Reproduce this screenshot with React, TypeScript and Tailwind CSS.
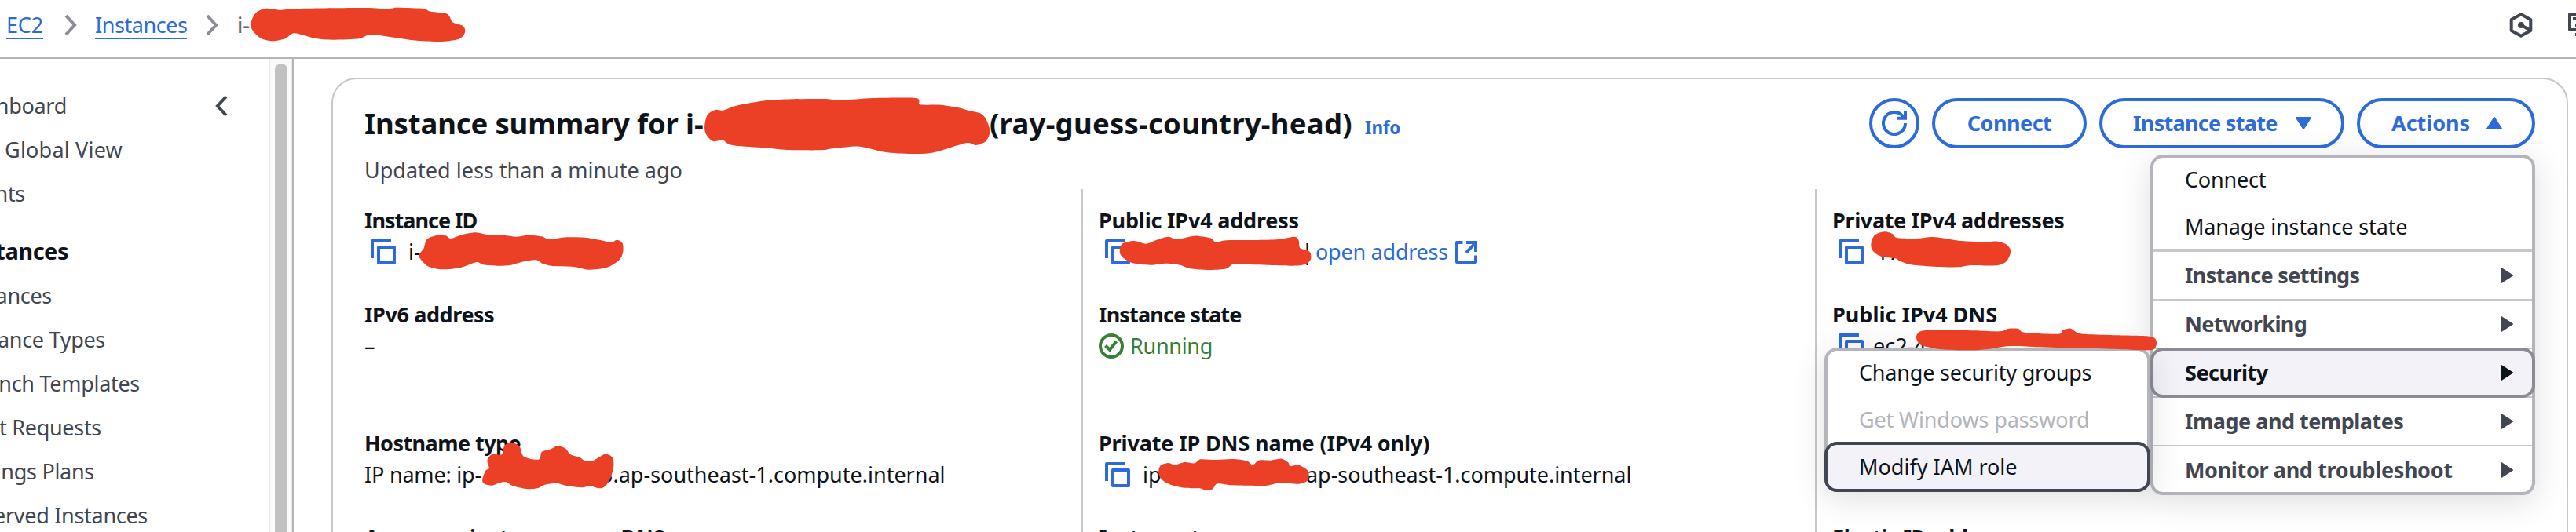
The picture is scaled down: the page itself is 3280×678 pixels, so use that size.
import type { ReactNode } from "react";

type Pt = [number, number];

const strokeIcon = { fill: "none", stroke: "currentColor", strokeWidth: 4 } as const;

function Copy() {
  return (
    <svg className="ml-2 mr-4 h-8 w-8 shrink-0 text-[#2d6bdb]" viewBox="0 0 32 32" {...strokeIcon}>
      <path d="M2 24V2H26" strokeLinejoin="round" />
      <rect x="10" y="10" width="20" height="20" strokeLinejoin="round" />
    </svg>
  );
}

function Chevron({ className, flip }: { className: string; flip?: boolean }) {
  return (
    <svg className={className} viewBox="0 0 16 28" {...strokeIcon}>
      <path d={flip ? "M14 2L3 14L14 26" : "M2 2L13 14L2 26"} />
    </svg>
  );
}

function Refresh() {
  return (
    <svg className="h-8 w-8" viewBox="0 0 32 32" {...strokeIcon}>
      <path d="M30 16A14 14 0 1 1 26.5 6.8L28.5 9.5" />
      <path d="M30 0V9.7H20" />
    </svg>
  );
}

function External() {
  return (
    <svg className="ml-[9px] h-[29px] w-7" viewBox="0 0 28 29" {...strokeIcon}>
      <path d="M9.5 2H2V27H26V18.5" strokeLinejoin="round" />
      <path d="M14 2H26V14M26 2L14 15" />
    </svg>
  );
}

function Check() {
  return (
    <svg className="mr-2 h-8 w-8" viewBox="0 0 32 32" {...strokeIcon}>
      <circle cx="16" cy="16" r="14" />
      <path d="M8.5 15.5L14 20.8L22.5 10" />
    </svg>
  );
}

function Caret({ up }: { up?: boolean }) {
  return (
    <svg className="h-4 w-5" viewBox="0 0 20 16" fill="currentColor" stroke="currentColor" strokeWidth="2" strokeLinejoin="round">
      <path d={up ? "M1 15H19L10 1Z" : "M1 1H19L10 15Z"} />
    </svg>
  );
}

function Arrow() {
  return (
    <svg className="h-5 w-4" viewBox="0 0 16 20" fill="currentColor" stroke="currentColor" strokeWidth="2" strokeLinejoin="round">
      <path d="M1 1V19L15 10Z" />
    </svg>
  );
}

function Label({ children, className = "" }: { children: string; className?: string }) {
  return <div className={`h-10 font-bold ${className}`}>{children}</div>;
}

function Value({ children, className = "" }: { children?: ReactNode; className?: string }) {
  return <div className={`flex h-10 items-center ${className}`}>{children}</div>;
}

function NavItem({ text, width, track = "tracking-[-0.3px]" }: { text: string; width: string; track?: string }) {
  return (
    <div className={`flex h-14 items-center justify-end overflow-hidden ${width} ${track}`}>{text}</div>
  );
}

function MenuGroup({ text, className }: { text: string; className: string }) {
  return (
    <div className={`flex items-center justify-between pl-10 pr-6 font-bold text-[#424650] ${className}`}>
      <span>{text}</span>
      <Arrow />
    </div>
  );
}

function smooth(pts: Pt[]) {
  const n = pts.length;
  let d = `M${pts[0][0]} ${pts[0][1]}`;
  for (let i = 0; i < n; i++) {
    const a = pts[(i + n - 1) % n];
    const b = pts[i];
    const c = pts[(i + 1) % n];
    const e = pts[(i + 2) % n];
    d += `C${b[0] + (c[0] - a[0]) / 7} ${b[1] + (c[1] - a[1]) / 7} ${c[0] - (e[0] - b[0]) / 7} ${c[1] - (e[1] - b[1]) / 7} ${c[0]} ${c[1]}`;
  }
  return d + "Z";
}

const strokes: { t: string; p: Pt[] }[] = [
  {
    t: "translate(0 0) scale(0.4082 0.3333)",
    p: [[782, 97], [788, 68], [802, 45], [830, 32], [877, 38], [930, 33], [1140, 30], [1205, 35], [1240, 29], [1320, 33], [1342, 44], [1395, 53], [1412, 85], [1445, 100], [1450, 125], [1430, 150], [1370, 159], [1290, 154], [1162, 133], [1120, 148], [1040, 152], [980, 146], [918, 127], [890, 148], [850, 157], [815, 147], [790, 120]],
  },
  {
    t: "translate(400 90) scale(0.574 0.3333)",
    p: [[866, 215], [872, 170], [890, 150], [907, 152], [940, 133], [1000, 115], [1060, 109], [1130, 108], [1170, 113], [1240, 105], [1330, 104], [1342, 115], [1345, 130], [1390, 131], [1430, 142], [1450, 152], [1480, 165], [1493, 195], [1499, 235], [1490, 270], [1468, 285], [1446, 277], [1375, 313], [1325, 318], [1265, 311], [1210, 290], [1150, 298], [1125, 304], [1050, 303], [1000, 295], [935, 287], [918, 280], [907, 266], [885, 270], [870, 245]],
  },
  {
    t: "translate(400 90) scale(0.574 0.3333)",
    p: [[232, 705], [243, 680], [250, 645], [272, 630], [292, 631], [303, 642], [325, 629], [358, 619], [385, 628], [420, 629], [448, 635], [475, 629], [505, 634], [521, 645], [560, 637], [600, 638], [635, 648], [658, 657], [672, 647], [684, 660], [685, 695], [676, 725], [650, 752], [610, 761], [575, 750], [530, 747], [507, 738], [492, 724], [460, 732], [435, 744], [405, 746], [375, 742], [360, 732], [325, 753], [285, 760], [255, 750], [238, 725]],
  },
  {
    t: "translate(400 440) scale(0.574 0.3333)",
    p: [[373, 515], [380, 480], [388, 470], [384, 440], [395, 416], [416, 418], [422, 385], [435, 371], [455, 385], [465, 425], [498, 437], [505, 408], [525, 397], [540, 385], [558, 395], [568, 417], [590, 430], [602, 443], [620, 440], [645, 416], [662, 430], [664, 465], [657, 510], [645, 540], [632, 547], [610, 537], [595, 544], [560, 537], [538, 527], [512, 533], [495, 547], [470, 549], [440, 537], [428, 524], [412, 525], [395, 536], [378, 530]],
  },
  {
    t: "translate(1240 90) scale(0.5102 0.3333)",
    p: [[364, 690], [370, 662], [400, 651], [430, 662], [455, 648], [485, 635], [507, 645], [550, 632], [590, 640], [604, 657], [630, 649], [700, 648], [760, 645], [800, 635], [811, 650], [814, 678], [838, 692], [841, 720], [828, 740], [790, 746], [700, 742], [650, 739], [630, 757], [590, 762], [540, 757], [515, 743], [480, 737], [440, 743], [395, 735], [370, 712]],
  },
  {
    t: "translate(1340 440) scale(0.5102 0.3333)",
    p: [[265, 485], [270, 460], [290, 450], [305, 458], [330, 447], [355, 451], [370, 436], [410, 438], [450, 435], [485, 442], [500, 458], [515, 440], [545, 440], [572, 434], [588, 447], [594, 462], [615, 458], [638, 480], [638, 515], [615, 530], [570, 525], [530, 537], [450, 535], [412, 529], [400, 550], [385, 556], [368, 547], [330, 545], [295, 533], [272, 512]],
  },
  {
    t: "translate(2280 90) scale(0.3333 0.3333)",
    p: [[307, 665], [320, 630], [358, 616], [390, 625], [406, 639], [480, 642], [540, 636], [600, 643], [640, 650], [740, 655], [790, 653], [825, 665], [841, 690], [825, 728], [785, 745], [690, 744], [640, 751], [560, 750], [460, 742], [415, 727], [400, 718], [345, 710], [315, 690]],
  },
  {
    t: "translate(2280 400) scale(0.3333 0.3333)",
    p: [[480, 92], [490, 70], [520, 62], [600, 60], [700, 64], [800, 67], [830, 57], [870, 57], [894, 71], [1022, 77], [1040, 62], [1070, 56], [1095, 72], [1130, 78], [1250, 82], [1370, 86], [1395, 98], [1397, 120], [1380, 138], [1300, 137], [1150, 132], [1040, 130], [950, 127], [840, 123], [760, 134], [690, 139], [580, 136], [500, 120]],
  },
];

function Submenu() {
  return (
    <div className="absolute right-[calc(100%+4px)] top-[242px] h-[184px] w-[415px] rounded-2xl border-4 border-[#b4b4bb] bg-white shadow-[0_8px_40px_2px_rgba(0,7,22,0.12)]">
      <div className="flex h-14 items-center pl-10 tracking-[-0.2px]">Change security groups</div>
      <div className="flex h-[60px] items-center pl-10 pt-1 tracking-[-0.15px] text-[#b4b4bb]">Get Windows password</div>
      <div className="-mx-1 flex h-16 items-center rounded-2xl border-4 border-[#424650] bg-[#f3f2f8] pl-10">
        Modify IAM role
      </div>
    </div>
  );
}

function ActionsMenu() {
  return (
    <div className="absolute right-0 top-[72px] z-10 h-[434px] w-[490px] rounded-2xl border-4 border-[#b4b4bb] bg-white font-normal text-[#0f141a] shadow-[0_8px_40px_2px_rgba(0,7,22,0.12)]">
      <div className="flex h-14 items-center pl-10 tracking-[-0.2px]">Connect</div>
      <div className="flex h-16 items-center border-b-4 border-[#c6c6cd] pl-10 pt-1 tracking-[-0.15px]">Manage instance state</div>
      <MenuGroup text="Instance settings" className="h-[62px] border-b-2 border-[#c6c6cd] tracking-[-0.65px]" />
      <MenuGroup text="Networking" className="h-[60px] tracking-[-0.6px]" />
      <div className="h-16 border-y-2 border-[#c6c6cd]">
        <div className="-mx-1 -mt-0.5 flex h-16 items-center justify-between rounded-2xl border-4 border-[#8c8c94] bg-[#f3f2f8] pl-10 pr-6 font-bold tracking-[-0.5px]">
          <span>Security</span>
          <Arrow />
        </div>
      </div>
      <MenuGroup text="Image and templates" className="h-[62px] border-b-2 border-[#c6c6cd] tracking-[-0.5px]" />
      <MenuGroup text="Monitor and troubleshoot" className="h-[58px] pt-0.5 tracking-[-0.35px]" />
      <Submenu />
    </div>
  );
}

export default function App() {
  return (
    <div className="relative flex h-[678px] w-[3280px] flex-col overflow-hidden whitespace-pre bg-white font-['Noto_Sans',sans-serif] text-[27px] leading-10 text-[#0f141a]">
      <header className="flex h-[75px] shrink-0 items-center border-b-2 border-[#b4b4bb] pb-[9px] pl-2">
        <div className="w-[74px]">
          <a className="inline-block h-[38px] border-b-2 border-[#2d6bdb] tracking-[-0.2px] text-[#2d6bdb]">EC2</a>
        </div>
        <Chevron className="h-7 w-4 text-[#8c8c94]" />
        <div className="ml-[23px] w-[141px]">
          <a className="inline-block h-[38px] border-b-2 border-[#2d6bdb] tracking-[-0.45px] text-[#2d6bdb]">Instances</a>
        </div>
        <Chevron className="h-7 w-4 text-[#8c8c94]" />
        <span className="ml-6 font-medium text-[#656871]">i-</span>
        <div className="ml-auto flex w-[86px] shrink-0 items-center gap-11 overflow-hidden text-[#424650]">
          <svg className="h-8 w-8 shrink-0" viewBox="0 0 32 32" {...strokeIcon}>
            <path d="M16 2.3L28.3 9V23L16 29.7L3.7 23V9Z" strokeLinejoin="round" />
            <circle cx="16" cy="16" r="4" fill="currentColor" stroke="none" />
            <path d="M16 16L27 22" />
          </svg>
          <svg className="h-8 w-8 shrink-0" viewBox="0 0 32 32" {...strokeIcon}>
            <path d="M30 22H2V2H30Z" strokeLinejoin="round" />
            <path d="M6 8H26M9 16H14M9 28H23" />
          </svg>
        </div>
      </header>

      <div className="flex min-h-0 flex-1">
        <nav className="w-[342px] shrink-0 pt-8 text-[#424650]">
          <div className="flex items-center">
            <NavItem text="Dashboard" width="w-[85px]" />
            <Chevron flip className="ml-[189px] h-7 w-4" />
          </div>
          <NavItem text="EC2 Global View" width="w-[156px]" track="tracking-[0.2px]" />
          <NavItem text="Events" width="w-[32px]" />
          <div className="flex h-[74px] w-[87px] items-center justify-end overflow-hidden pt-4 text-[29px] font-bold tracking-[-0.5px] text-[#0f141a]">
            Instances
          </div>
          <NavItem text="Instances" width="w-[66px]" />
          <NavItem text="Instance Types" width="w-[134px]" />
          <NavItem text="Launch Templates" width="w-[178px]" />
          <NavItem text="Spot Requests" width="w-[129px]" />
          <NavItem text="Savings Plans" width="w-[120px]" />
          <NavItem text="Reserved Instances" width="w-[188px]" />
        </nav>
        <div className="w-[30px] shrink-0 border-x-2 border-[#e8e8e8] bg-[#fafafa] pl-1.5 pt-1.5">
          <div className="h-[640px] w-4 rounded-full bg-[#c1c1c1]" />
        </div>

        <main className="h-[640px] w-[2908px] border-l-2 border-[#b4b4bb] pl-12 pt-6">
          <section className="h-[700px] w-[2848px] rounded-[32px] border-2 border-[#c6c6cd] pl-10 pr-10 pt-6">
            <div className="flex h-16 items-center justify-between">
              <div className="flex items-baseline pt-[5px]">
                <h2 className="flex text-[36.5px] font-bold">
                  <span className="w-[796px] tracking-[-0.15px]">Instance summary for i-</span>
                  <span className="tracking-[0.25px]">(ray-guess-country-head)</span>
                </h2>
                <a className="ml-4 text-[22.5px] font-bold tracking-[-0.2px] text-[#2d6bdb]">Info</a>
              </div>
              <div className="flex gap-4 font-bold text-[#2d6bdb]">
                <button className="flex h-16 w-16 items-center justify-center rounded-full border-4 border-[#2d6bdb]">
                  <Refresh />
                </button>
                <button className="h-16 w-[197px] rounded-full border-4 border-[#2d6bdb] tracking-[-0.5px]">Connect</button>
                <button className="flex h-16 w-[312px] items-center justify-between rounded-full border-4 border-[#2d6bdb] pl-[39px] pr-[38px] tracking-[-0.7px]">
                  Instance state
                  <Caret />
                </button>
                <div className="relative">
                  <button className="flex h-16 w-[227px] items-center justify-between rounded-full border-4 border-[#2d6bdb] pl-10 pr-[38px] tracking-[-0.05px]">
                    Actions
                    <Caret up />
                  </button>
                  <ActionsMenu />
                </div>
              </div>
            </div>
            <p className="mt-2 h-11 text-[#424650]">Updated less than a minute ago</p>

            <div className="flex h-[460px]">
              <div className="w-[913px] shrink-0 pt-5">
                <Label className="tracking-[-1px]">Instance ID</Label>
                <Value><Copy />i-</Value>
                <Label className="mt-10 tracking-[-0.4px]">IPv6 address</Label>
                <Value>–</Value>
                <Label className="mt-[84px] tracking-[-0.55px]">Hostname type</Label>
                <Value>
                  <span className="w-[301px] tracking-[-0.2px]">IP name: ip-</span>
                  <span>3.ap-southeast-1.compute.internal</span>
                </Value>
                <Label className="mt-10 tracking-[-0.4px]">Answer private resource DNS name</Label>
              </div>
              <div className="w-[934px] shrink-0 border-l-2 border-[#c6c6cd] pl-5 pt-5">
                <Label className="tracking-[-0.2px]">Public IPv4 address</Label>
                <Value>
                  <Copy />
                  <span className="ml-[200px] w-5 pl-0.5">|</span>
                  <span className="tracking-[-0.25px] text-[#2d6bdb]">open address</span>
                  <span className="text-[#2d6bdb]"><External /></span>
                </Value>
                <Label className="mt-10 tracking-[-0.85px]">Instance state</Label>
                <Value className="tracking-[-0.3px] text-[#378036]"><Check />Running</Value>
                <Label className="mt-[84px] tracking-[-0.15px]">Private IP DNS name (IPv4 only)</Label>
                <Value>
                  <Copy />
                  <span className="w-[208px]">ip-</span>
                  <span className="tracking-[-0.05px]">ap-southeast-1.compute.internal</span>
                </Value>
                <Label className="mt-10 tracking-[-0.75px]">Instance type</Label>
              </div>
              <div className="flex-1 border-l-2 border-[#c6c6cd] pl-5 pt-5">
                <Label className="tracking-[-0.35px]">Private IPv4 addresses</Label>
                <Value><Copy />17</Value>
                <Label className="mt-10">Public IPv4 DNS</Label>
                <Value><Copy /><span className="-ml-1">ec2-4</span></Value>
                <Label className="mt-[204px] tracking-[-0.4px]">Elastic IP addresses</Label>
              </div>
            </div>
          </section>
        </main>
      </div>

      <svg className="pointer-events-none absolute inset-0 z-20 h-[678px] w-[3280px]" viewBox="0 0 3280 678" fill="#eb4026">
        {strokes.map((s, i) => (
          <path key={i} transform={s.t} d={smooth(s.p)} />
        ))}
      </svg>
    </div>
  );
}
